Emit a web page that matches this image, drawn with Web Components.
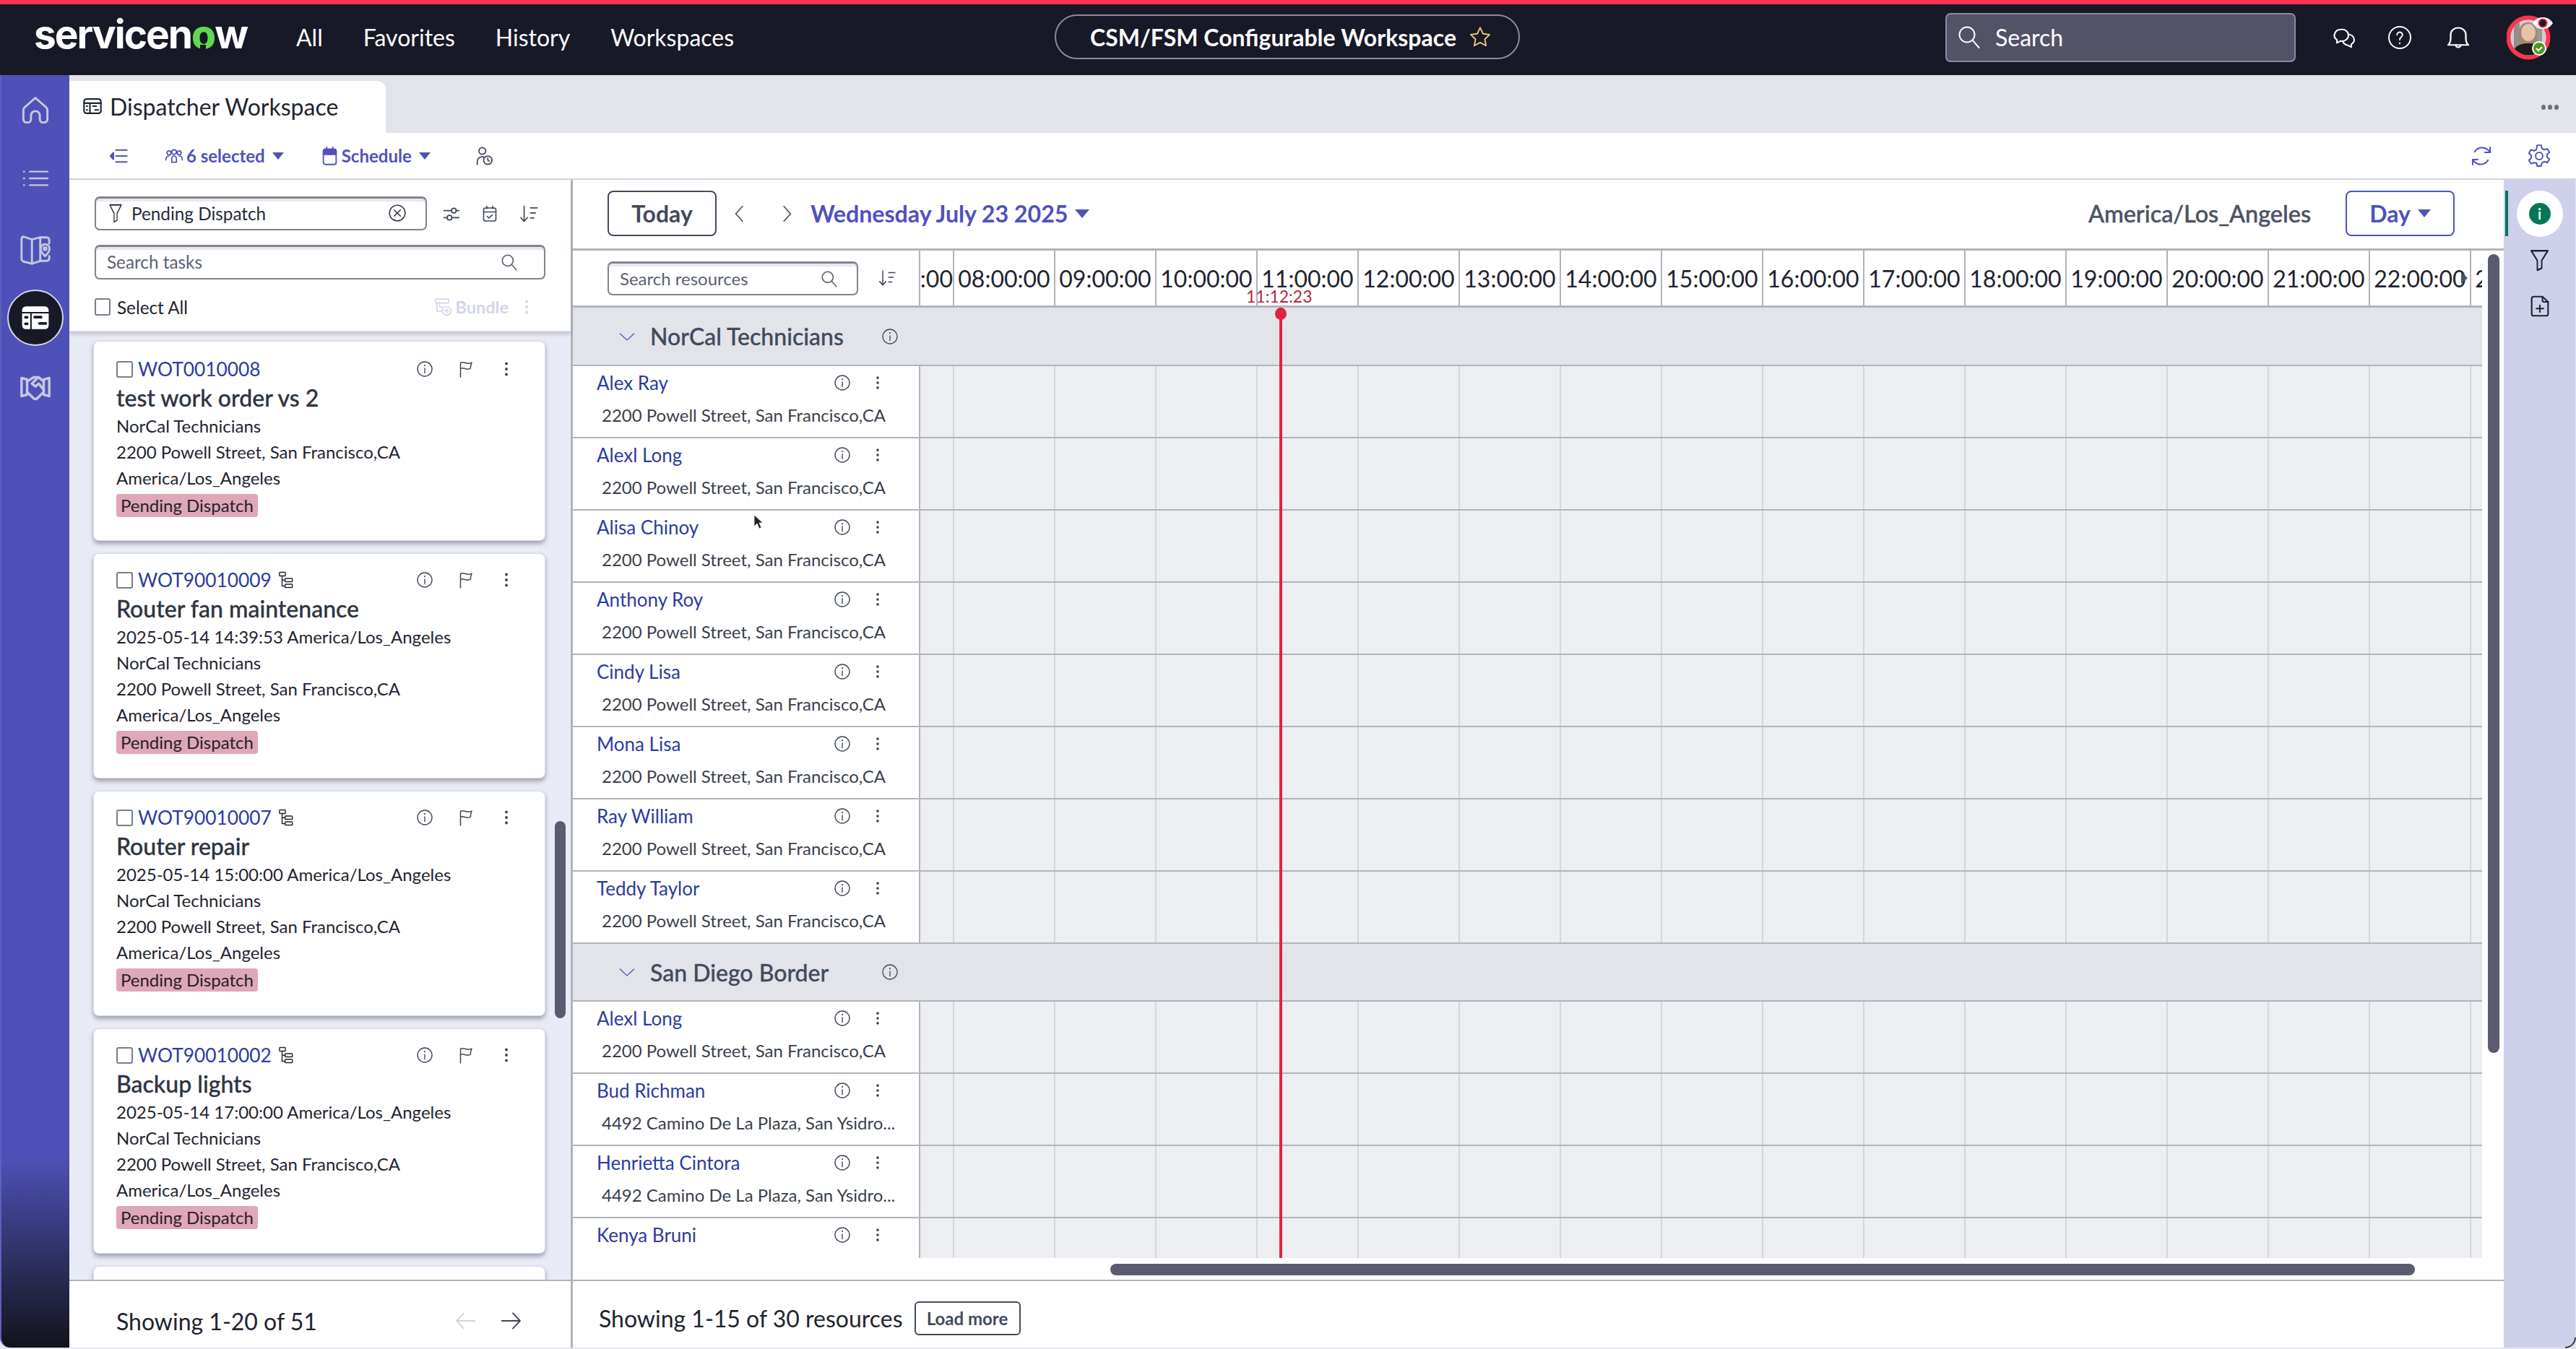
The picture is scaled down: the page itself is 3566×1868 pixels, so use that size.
<!doctype html>
<html>
<head>
<meta charset="utf-8">
<title>Dispatcher Workspace</title>
<style>
html,body{margin:0;padding:0;width:3566px;height:1868px;overflow:hidden;background:#e4e5ea}
body{font-family:"Lato","Liberation Sans",sans-serif;display:flex;flex-direction:column;color:#1f2430}
</style>
</head>
<body>
<sn-header></sn-header>
<div style="display:flex;height:1762px">
  <sn-rail></sn-rail>
  <div style="flex:1;display:flex;flex-direction:column;min-width:0">
    <sn-tabs></sn-tabs>
    <sn-toolbar></sn-toolbar>
    <div style="flex:1;display:flex;min-height:0">
      <task-panel></task-panel>
      <schedule-view></schedule-view>
      <side-rail></side-rail>
    </div>
  </div>
</div>

<script>
// all the icons in one place, 24 box unless the path says otherwise
var paths = {
  search: '<circle cx="10" cy="10" r="7"/><path d="M15.2 15.2 21 22"/>',
  chat: '<path d="M9 3a6.500 6.500 0 0 0-4 11.600V18l3.400-2.200A6.500 6.500 0 1 0 9 3Z"/><path d="M16.500 8.500a6 6 0 0 1 2.500 11V22.500L15.500 20.500a6 6 0 0 1-4.500-3.500"/>',
  help: '<circle cx="12" cy="12" r="10"/><path d="M9.500 9.500a2.500 2.500 0 1 1 3.800 2.100c-.9.6-1.300 1.100-1.300 2.400"/><path d="M12 17v.5"/>',
  bell: '<path d="M4 18.500c1.500-1.500 2-3 2-6V9.500a6 6 0 0 1 12 0V12.500c0 3 .5 4.500 2 6Z"/><path d="M10 18.500a2 2 0 0 0 4 0"/>',
  home: '<path d="M12 2 3.500 9.500A3 3 0 0 0 2.500 12v7a2.500 2.500 0 0 0 2.500 2.500h1A2.500 2.500 0 0 0 8.500 19v-3a3.500 3.500 0 0 1 7 0v3a2.500 2.500 0 0 0 2.500 2.500h1a2.500 2.500 0 0 0 2.500-2.500v-7a3 3 0 0 0-1-2.500Z"/>',
  list: '<path d="M7.500 5H22M7.500 12H22M7.500 19H22"/><path d="M2.500 5h.1M2.500 12h.1M2.500 19h.1"/>',
  map: '<path d="M22 8V5.500C22 4 21 3.500 19.500 3.500H15.500L9.500 5 3.500 3C2.500 3 2 3.800 2 5V19c0 1 .5 1.500 1.500 2L9.500 22.500 15.500 20.500H19.500C21 20.500 22 20 22 18.500V17"/><path d="M9.500 5V22.500M15.500 3.500V20.500"/><path d="M19 17s-3.200-3-3.200-5.300a3.200 3.200 0 0 1 6.400 0C22.200 14 19 17 19 17Z"/><circle cx="19" cy="11.600" r="1"/>',
  board: '<rect x="2" y="3.500" width="20" height="17" rx="3"/><path d="M2 8.500h20M9 8.500v12"/><path d="M5 12h1M5 16.500h1M12.500 12h4M15 16.500h4"/>',
  boardfill: '<rect x="1.500" y="3" width="21" height="18" rx="3" fill="#fff" stroke="none"/><path d="M1.500 8h21M8.500 8v13" stroke="#181926" stroke-width="1.200"/><path d="M4.200 11.600h1.300M4.200 16.800h1.300M11.500 11.500h5M15.200 16.500h5" stroke="#181926" stroke-width="2.200" stroke-linecap="round"/>',
  shake: '<path d="M2 5.500 6 6.500V17.500L2 18.500ZM22 5.500 18 6.500V17.500L22 18.500Z"/><path d="M6 8 10.500 5H14.500L18 8M6 15.500 10.500 20c1 .8 2 .8 3 0L18 15.500"/><path d="M14 5 9.500 9.500 12 11.500 14.500 9.500 18 14"/>',
  collapse: '<path d="M9 5h13M9 12h13M9 19h13"/><path d="M6 8 2.500 12 6 16Z" fill="currentColor"/>',
  people: '<circle cx="5.500" cy="8" r="2.500"/><circle cx="12" cy="7" r="3"/><circle cx="18.500" cy="8" r="2.500"/><path d="M1.500 17c0-3 1.500-5 4-5M9 20v-3.500c0-3 1-4.500 3-4.500s3 1.500 3 4.500V20ZM22.500 17c0-3-1.500-5-4-5"/>',
  calfill: '<rect x="3.500" y="4" width="17" height="18" rx="2.500"/><path d="M3.500 10h17V6.500a2.500 2.500 0 0 0-2.500-2.500H6a2.500 2.500 0 0 0-2.500 2.500Z" fill="currentColor"/><path d="M8 1.500V5M16 1.500V5"/>',
  personclock: '<circle cx="10" cy="6" r="4"/><path d="M4 22v-3c0-3.500 2.500-6 6-6 1 0 2 .2 2.800.7"/><circle cx="16.500" cy="17" r="5"/><path d="M16.500 14.500V17l1.800 1"/>',
  refresh: '<path d="M5.500 8A8.500 8.500 0 0 1 18.500 6L20.500 8.500"/><path d="M20.500 3.500v5h-5" stroke-linejoin="miter"/><path d="M18.500 16A8.500 8.500 0 0 1 5.500 18L3.500 15.500"/><path d="M3.500 20.500v-5h5" stroke-linejoin="miter"/>',
  gear: '<path d="M10 1.500h4l.6 3 2.400 1.400 3-1 2 3.500-2.300 2c.1.900.1 1.800 0 2.600l2.300 2-2 3.500-3-1-2.400 1.400-.6 3h-4l-.6-3L7 18.500l-3 1-2-3.500 2.300-2a11 11 0 0 1 0-2.600L2 9.400 4 5.900l3 1L9.400 5.500Z"/><circle cx="12" cy="12" r="3.500"/>',
  funnel: '<path d="M2.500 3h19L14.500 12.500V20L9.500 22V12.500Z"/>',
  xcircle: '<circle cx="12" cy="12" r="10"/><path d="M8 8l8 8M16 8l-8 8"/>',
  sliders: '<path d="M2.500 8h9M18 8h3.500M2.500 17H6M13 17h8.500"/><circle cx="15" cy="8" r="3"/><circle cx="9.500" cy="17" r="3"/>',
  cal: '<rect x="3.500" y="4" width="17" height="18" rx="2.500"/><path d="M3.500 9.500h17M8 1.500V5M16 1.500V5"/><path d="M8.500 15.500 11 18l4.500-4.500"/>',
  sort: '<path d="M6.500 3v18M2.500 16.500 6.500 21l4-4.500"/><path d="M14 5h8M14 11h6M14 17h4"/>',
  bundle: '<rect x="2.500" y="2" width="17" height="5" rx="1"/><path d="M4.500 7v10.500h6M8 7v5h4"/><circle cx="17" cy="17" r="5.500"/><path d="M17 14.500v5M14.500 17h5"/>',
  dots: '<path d="M12 4.500v.1M12 12v.1M12 19.500v.1" stroke-width="4"/>',
  info: '<circle cx="12" cy="12" r="10"/><path d="M12 11v6.500"/><path d="M12 7v.2" stroke-width="2"/>',
  flag: '<path d="M4.500 23V3.500c5-3 9.500 3.500 15.500-.5-1 3-2 5-1.500 8-5.500 4-9.500-2.500-14 .5"/>',
  tree: '<rect x="2" y="1.500" width="9" height="5" rx=".8"/><rect x="10.500" y="10" width="11" height="4.500" rx=".8"/><rect x="10.500" y="18" width="11" height="4.500" rx=".8"/><path d="M6 6.500V20.500H10.500M6 12.200H10.500"/>',
  chevleft: '<path d="M15.500 2.500 7 12l8.500 9.500"/>',
  chevright: '<path d="M8.500 2.500 17 12l-8.500 9.500"/>',
  chevdown: '<path d="M3 7l9 11 9-11"/>',
  larrow: '<path d="M22 12H3M10.500 4 3 12l7.500 8"/>',
  rarrow: '<path d="M2 12h19M13.500 4 21 12l-7.500 8"/>',
  file: '<path d="M14.500 2H6a2 2 0 0 0-2 2v16a2 2 0 0 0 2 2h12a2 2 0 0 0 2-2V7.500Z"/><path d="M14.500 2v4a1.500 1.500 0 0 0 1.500 1.500h4"/><path d="M12 11v7M8.500 14.500h7"/>'
};

class SnIcon extends HTMLElement {
  constructor() {
    super();
    this.attachShadow({ mode: "open" });
  }
  connectedCallback() {
    var size = this.getAttribute("size") || 28;
    var sw = this.getAttribute("sw") || 1.6;
    var h = this.getAttribute("h") || size;
    this.shadowRoot.innerHTML = `
<style>
:host{display:inline-flex;flex:none;line-height:0}
svg{width:${size}px;height:${h}px;display:block}
</style>
<svg viewBox="0 0 24 24" preserveAspectRatio="none" fill="none" stroke="currentColor" stroke-width="${sw}" stroke-linecap="round" stroke-linejoin="round">${paths[this.getAttribute("name")] || ""}</svg>`;
  }
}
customElements.define("sn-icon", SnIcon);

class SnHeader extends HTMLElement {
  constructor() {
    super();
    this.attachShadow({ mode: "open" });
    this.shadowRoot.innerHTML = `
<style>
:host{display:flex;align-items:center;height:98px;border-top:6px solid #ff3350;background:#181926;color:#fff;flex:none;position:relative;font-size:32px}
.logo{margin-left:47px;font:700 55px/1 "Inter","Liberation Sans",sans-serif;letter-spacing:-2px;width:300px;margin-top:-16px;position:relative;white-space:nowrap}
.logo b{color:#62d84e;font-weight:800;position:relative}
.logo b::after{content:"";position:absolute;left:50%;bottom:8px;width:8px;height:10px;margin-left:-4px;background:#181926}
nav{display:flex;gap:56px;margin-left:63px;margin-bottom:8px}
.pill{position:absolute;left:1460px;top:14px;width:640px;height:58px;border:2px solid #8a8a98;border-radius:31px;display:flex;align-items:center;justify-content:center;gap:17px;font-weight:700;font-size:32px;box-sizing:content-box}
.pill span{margin-left:10px}
.search{position:absolute;left:2693px;top:12px;width:485px;height:68px;box-sizing:border-box;border:2px solid #8a8b9c;border-radius:7px;background:#535367;display:flex;align-items:center;padding:0 0 2px 13px;gap:18px;font-size:32px}
.tools{position:absolute;left:3228px;top:0;height:92px;display:flex;align-items:center;gap:42px}
.me{position:absolute;left:3470px;top:16px;width:60px;height:60px}
</style>
<div class="logo">servicen<b>o</b>w</div>
<nav><span>All</span><span>Favorites</span><span>History</span><span>Workspaces</span></nav>
<div class="pill"><span>CSM/FSM Configurable Workspace</span>
  <svg width="32" height="32" viewBox="0 0 24 24" fill="none" stroke="#e9c878" stroke-width="1.400" stroke-linejoin="round"><path d="m12 2.500 3 6.300 6.800.9-5 4.700 1.300 6.800-6.100-3.300-6.100 3.300 1.300-6.800-5-4.700 6.800-.9Z"/></svg></div>
<div class="search"><sn-icon name="search" size="36" sw="1.300"></sn-icon><span>Search</span></div>
<div class="tools"><sn-icon name="chat" size="34" h="30" sw="1.500"></sn-icon><sn-icon name="help" size="36" sw="1.300"></sn-icon><sn-icon name="bell" size="42" h="38" sw="1.300"></sn-icon></div>
<div class="me">
  <svg width="76" height="76" viewBox="0 0 76 76" style="position:absolute;left:0;top:-6px">
    <circle cx="30" cy="36" r="27.500" fill="#ddd" stroke="#ff3350" stroke-width="6"/>
    <clipPath id="f"><circle cx="30" cy="36" r="24.500"/></clipPath>
    <g clip-path="url(#f)">
      <rect x="5" y="10" width="50" height="52" fill="#cfcfcf"/>
      <rect x="10" y="10" width="8" height="52" fill="#8f8f8f"/>
      <rect x="42" y="10" width="7" height="52" fill="#9a9a9a"/>
      <path d="M18 34c-2-14 4-19 12-19s14 5 12 19l2 12H16Z" fill="#a08a72"/>
      <ellipse cx="30" cy="29" rx="10" ry="12" fill="#e8c3ab"/>
      <path d="M8 62c0-13 9-18 22-18s22 5 22 18Z" fill="#1d1a1c"/>
    </g>
    <path d="M36 16c4-6 8-8 14-8s10 2 14 8c-4 6-8 8-14 8s-10-2-14-8Z" fill="#fff"/>
    <circle cx="50" cy="16" r="5.500" fill="#1a1a22"/><circle cx="50" cy="16" r="5.500" fill="none" stroke="#e3274a" stroke-width="2"/>
    <circle cx="45" cy="51" r="10" fill="#fff"/><circle cx="45" cy="51" r="8" fill="#4c9a1f"/>
    <path d="m41 51 3 3 5-5" stroke="#fff" stroke-width="2.200" fill="none"/>
  </svg>
</div>`;
  }
}
customElements.define("sn-header", SnHeader);

class SnRail extends HTMLElement {
  constructor() {
    super();
    this.attachShadow({ mode: "open" });
    this.shadowRoot.innerHTML = `
<style>
:host{display:flex;flex-direction:column;align-items:center;width:96px;flex:none;box-sizing:border-box;color:#c6c8dc;border-bottom-left-radius:14px;
 background:linear-gradient(#4f51b9 0,#4f51b9 1495px,#181926 1740px,#11121a 100%);border-left:2px solid #5d5fc0;padding-top:26px}
.slot{height:95px;display:flex;align-items:center;justify-content:center}
.on{width:78px;height:78px;box-sizing:border-box;border-radius:50%;background:#181926;border:2px solid #d5d6e6;margin:0 0 8px;display:flex;align-items:center;justify-content:center;color:#fff}
</style>
<div class="slot" style="height:46px;margin-bottom:48px"><sn-icon name="home" size="42" sw="1.700"></sn-icon></div>
<div class="slot" style="height:46px;margin-bottom:52px"><sn-icon name="list" size="40" h="32" sw="1.800"></sn-icon></div>
<div class="slot" style="height:46px;margin-bottom:33px"><sn-icon name="map" size="46" sw="1.500"></sn-icon></div>
<div class="on"><sn-icon name="boardfill" size="42"></sn-icon></div>
<div class="slot" style="height:46px;margin-top:26px"><sn-icon name="shake" size="46" sw="1.800"></sn-icon></div>`;
  }
}
customElements.define("sn-rail", SnRail);

class SnTabs extends HTMLElement {
  constructor() {
    super();
    this.attachShadow({ mode: "open" });
    this.shadowRoot.innerHTML = `
<style>
:host{display:flex;height:80px;flex:none;background:#e3e4ea;align-items:flex-end;justify-content:space-between}
.tab{width:438px;height:72px;background:#fff;border-top-right-radius:12px;display:flex;align-items:center;gap:10px;box-sizing:border-box;padding:0 0 2px 18px;font-size:32px;color:#1f2430}
.more{margin:0 24px 32px 0;display:flex;gap:3px}
.more i{width:6px;height:7px;border-radius:50%;background:#6b6e80}
</style>
<div class="tab"><sn-icon name="board" size="28" sw="1.800"></sn-icon><span>Dispatcher Workspace</span></div>
<div class="more"><i></i><i></i><i></i></div>`;
  }
}
customElements.define("sn-tabs", SnTabs);

class SnToolbar extends HTMLElement {
  constructor() {
    super();
    this.attachShadow({ mode: "open" });
    this.shadowRoot.innerHTML = `
<style>
:host{display:flex;height:65px;flex:none;box-sizing:border-box;background:#fff;border-bottom:2px solid #d3d4d8;align-items:center;color:#4f52bd;font-weight:700;font-size:24px;padding-left:54px}
.group{display:flex;align-items:center;gap:4px}
.tri{width:0;height:0;border:8px solid transparent;border-top:10px solid #4f52bd;border-bottom:0;margin-left:6px}
.end{margin-left:auto;display:flex;gap:46px;padding-right:34px}
</style>
<sn-icon name="collapse" size="28" sw="1.700"></sn-icon>
<div class="group" style="margin-left:50px"><sn-icon name="people" size="26" sw="1.600"></sn-icon><span>6 selected</span><i class="tri"></i></div>
<div class="group" style="margin-left:51px"><sn-icon name="calfill" size="25" h="28" sw="1.700"></sn-icon><span>Schedule</span><i class="tri"></i></div>
<sn-icon name="personclock" size="28" sw="1.500" style="margin-left:60px;color:#3f4657"></sn-icon>
<div class="end"><sn-icon name="refresh" size="34" sw="1.400"></sn-icon><sn-icon name="gear" size="34" sw="1.400"></sn-icon></div>`;
  }
}
customElements.define("sn-toolbar", SnToolbar);

var cardTemplate = document.createElement("template");
cardTemplate.innerHTML = `
<style>
:host{display:block;flex:none;box-sizing:border-box;background:#fff;border-radius:7px;width:624px;margin-left:34px;
 padding:21px 0 0 31px;box-shadow:0 0 0 1px #d9dbe7,0 4px 6px 1px rgba(70,72,90,.45);font-size:24px;color:#1f2430}
.top{display:flex;align-items:center;height:30px;line-height:30px}
.box{width:23px;height:23px;box-sizing:border-box;border:2px solid #7a7e8a;border-radius:3px;margin-right:7px}
a{color:#2c3c9e;font-size:26.300px}
.tree{margin-left:9px;color:#1f2430}
.title{font-size:32px;font-weight:500;-webkit-text-stroke:.3px #2e3440;color:#2e3440;line-height:36px;margin-top:7px;margin-bottom:3px}
.line{line-height:36px;height:36px}
.tag{display:inline-block;background:#dfa7b8;border-radius:4px;padding:0 6px;line-height:32px;font-size:24px;margin-top:4px;color:#25202a}
</style>
<div class="top"><i class="box"></i><a></a><sn-icon class="tree" name="tree" size="22" h="24" sw="1.500"></sn-icon>
  <span style="flex:1"></span>
  <sn-icon name="info" size="24" sw="1.400" style="color:#3f4657"></sn-icon>
  <sn-icon name="flag" size="24" sw="1.500" style="margin-left:33px;color:#3f4657"></sn-icon>
  <sn-icon name="dots" size="24" style="margin-left:32px;margin-right:41px;color:#3f4657"></sn-icon>
</div>
<div class="title"></div>
<div class="lines"></div>
<span class="tag">Pending Dispatch</span>`;

class TaskCard extends HTMLElement {
  constructor() {
    super();
    this.attachShadow({ mode: "open" });
    this.shadowRoot.appendChild(cardTemplate.content.cloneNode(true));
  }
  connectedCallback() {
    var s = this.shadowRoot;
    var when = this.getAttribute("when");
    this.style.height = (when ? 310 : 275) + "px";
    // the next card only peeks in at the bottom of the list, nothing of it is readable
    if (this.hasAttribute("blank")) {
      s.querySelectorAll(".top,.title,.lines,.tag").forEach(function (n) { n.remove(); });
      this.style.height = "310px";
      return;
    }
    s.querySelector("a").textContent = this.getAttribute("num");
    s.querySelector(".title").textContent = this.getAttribute("label");
    if (!this.hasAttribute("tree")) s.querySelector(".tree").remove();
    var lines = ["NorCal Technicians", "2200 Powell Street, San Francisco,CA", "America/Los_Angeles"];
    if (when) lines.unshift(when);
    else this.style.paddingTop = "23px";
    s.querySelector(".lines").innerHTML = lines.map(function (l) { return '<div class="line">' + l + "</div>"; }).join("");
  }
}
customElements.define("task-card", TaskCard);

class TaskPanel extends HTMLElement {
  constructor() {
    super();
    this.attachShadow({ mode: "open" });
    this.shadowRoot.innerHTML = `
<style>
:host{display:flex;flex-direction:column;width:697px;flex:none;box-sizing:border-box;border-right:3px solid #b2b4bc;background:#fff;position:relative;font-size:24.300px}
.head{height:211px;flex:none;box-sizing:border-box;padding:23px 0 0 35px;background:#fff;border-bottom:2px solid #d6d7e0;position:relative;z-index:1;box-shadow:0 3px 5px rgba(80,80,100,.25)}
.row{display:flex;align-items:center}
.inp{box-sizing:border-box;height:47px;border:2px solid #82858f;border-top-width:3px;box-shadow:inset 0 4px 0 #e8e9ec;border-radius:7px;display:flex;align-items:center;padding:0 13px 2px 17px;color:#262b38}
.list{flex:1;min-height:0;overflow:hidden;background:#e9ebf6;display:flex;flex-direction:column;gap:19px;padding-top:13px;position:relative}
.foot{height:94px;flex:none;box-sizing:border-box;border-top:2px solid #b2b4bc;background:#fff;display:flex;align-items:center;padding:18px 0 0 65px;font-size:32px;color:#1f2430}
.thumb{position:absolute;left:672px;top:888px;width:15px;height:273px;border-radius:8px;background:#5c5c70;z-index:2}
</style>
<div class="head">
  <div class="row">
    <div class="inp" style="width:460px"><sn-icon name="funnel" size="20" h="30" sw="1.500"></sn-icon><span style="margin-left:12px">Pending Dispatch</span><span style="flex:1"></span><sn-icon name="xcircle" size="26" sw="1.300" style="margin-right:13px"></sn-icon></div>
    <sn-icon name="sliders" size="26" sw="1.600" style="margin-left:21px;color:#3f4657"></sn-icon>
    <sn-icon name="cal" size="24" sw="1.600" style="margin-left:28px;color:#3f4657"></sn-icon>
    <sn-icon name="sort" size="28" sw="1.400" style="margin-left:28px;color:#3f4657"></sn-icon>
  </div>
  <div class="inp" style="width:624px;height:48px;margin-top:20px;color:#5b6172;padding-left:15px"><span>Search tasks</span><span style="flex:1"></span><sn-icon name="search" size="26" sw="1.500" style="margin-right:22px"></sn-icon></div>
  <div class="row" style="margin-top:25px;height:26px">
    <i style="width:22px;height:24px;box-sizing:border-box;border:2px solid #7a7e8a;border-radius:3px"></i>
    <span style="margin-left:9px">Select All</span><span style="flex:1"></span>
    <span style="display:flex;align-items:center;color:#d3d4ee;font-weight:700;gap:5px;margin-right:13px;font-size:23.500px"><sn-icon name="bundle" size="26" sw="1.500"></sn-icon>Bundle</span>
    <sn-icon name="dots" size="24" style="color:#d3d4ee;margin-right:49px"></sn-icon>
  </div>
</div>
<div class="list">
  <task-card num="WOT0010008" label="test work order vs 2"></task-card>
  <task-card num="WOT90010009" label="Router fan maintenance" when="2025-05-14 14:39:53 America/Los_Angeles" tree></task-card>
  <task-card num="WOT90010007" label="Router repair" when="2025-05-14 15:00:00 America/Los_Angeles" tree></task-card>
  <task-card num="WOT90010002" label="Backup lights" when="2025-05-14 17:00:00 America/Los_Angeles" tree></task-card>
  <task-card blank></task-card>
</div>
<div class="foot"><span>Showing 1-20 of 51</span><span style="flex:1"></span>
  <sn-icon name="larrow" size="32" sw="1.400" style="color:#d3d4da"></sn-icon>
  <sn-icon name="rarrow" size="32" sw="1.400" style="margin:0 66px 0 32px;color:#3f4657"></sn-icon></div>
<div class="thumb"></div>`;
  }
}
customElements.define("task-panel", TaskPanel);

class ResourceRow extends HTMLElement {
  constructor() {
    super();
    this.attachShadow({ mode: "open" });
    this.shadowRoot.innerHTML = `
<style>
:host{display:flex;flex:none;height:100px;box-sizing:border-box;border-bottom:2px solid #b2b4bc}
.who{width:481px;flex:none;box-sizing:border-box;background:#fff;border-right:2px solid #b2b4bc;padding:0 0 0 33px;position:relative}
.n{display:flex;align-items:center;height:46px;color:#2c3c9e;font-size:26px}
.n span{flex:1}
.a{margin-left:7px;font-size:24px;color:#3a3f4c;white-space:nowrap;line-height:34px;height:34px;margin-top:5px}
.cells{flex:1;background:linear-gradient(90deg,#d5d6da 2px,transparent 2px) 45px 0/140px 100% #eceef1}
</style>
<div class="who">
  <div class="n"><span></span><sn-icon name="info" size="24" sw="1.400" style="color:#3f4657"></sn-icon><sn-icon name="dots" size="22" style="margin:0 46px 0 26px;color:#3f4657"></sn-icon></div>
  <div class="a"></div>
</div>
<div class="cells"></div>`;
  }
  connectedCallback() {
    this.shadowRoot.querySelector(".n span").textContent = this.getAttribute("name");
    this.shadowRoot.querySelector(".a").textContent = this.getAttribute("addr");
  }
}
customElements.define("resource-row", ResourceRow);

class ResourceGroup extends HTMLElement {
  constructor() {
    super();
    this.attachShadow({ mode: "open" });
    this.shadowRoot.innerHTML = `
<style>
:host{display:block;flex:none}
.g{height:81px;box-sizing:border-box;background:#e2e4ea;border-bottom:2px solid #b2b4bc;display:flex;align-items:center;padding-left:62px;font-size:32px;font-weight:500;-webkit-text-stroke:.3px #434a5b;color:#434a5b}
.g span{margin:0 0 0 19px;width:320px}
</style>
<div class="g"><sn-icon name="chevdown" size="26" h="20" sw="1.400" style="color:#4f52bd"></sn-icon><span></span><sn-icon name="info" size="24" sw="1.300"></sn-icon></div>
<slot></slot>`;
  }
  connectedCallback() {
    this.shadowRoot.querySelector("span").textContent = this.getAttribute("name");
    if (this.hasAttribute("h")) this.shadowRoot.querySelector(".g").style.height = this.getAttribute("h") + "px";
  }
}
customElements.define("resource-group", ResourceGroup);

class ScheduleView extends HTMLElement {
  constructor() {
    super();
    this.attachShadow({ mode: "open" });
    var hours = "";
    for (var h = 8; h <= 23; h++) hours += "<div class='h'>" + (h < 10 ? "0" + h : h) + ":00:00</div>";
    this.shadowRoot.innerHTML = `
<style>
:host{display:flex;flex-direction:column;flex:1;min-width:0;position:relative;background:#fff;color:#1f2430}
.bar{height:98px;flex:none;box-sizing:border-box;border-bottom:3px solid #b2b4bc;display:flex;align-items:center;padding:0 68px 2px 48px;font-size:32px}
.today{width:151px;height:63px;box-sizing:border-box;border:2px solid #434a5b;border-radius:8px;display:flex;align-items:center;justify-content:center;font-weight:700;font-size:32px;color:#434a5b}
.date{color:#4f52bd;font-weight:700;font-size:32.300px;margin-left:20px;letter-spacing:-.1px}
.tri{width:0;height:0;border:10px solid transparent;border-top:12px solid #4f52bd;border-bottom:0;margin-left:10px;display:block}
.zone{margin-left:auto;font-weight:500;-webkit-text-stroke:.45px #4b5263;color:#4b5263;font-size:32.400px}
.day{margin-left:48px;width:151px;height:63px;box-sizing:border-box;border:2px solid #4f52bd;border-radius:8px;display:flex;align-items:center;justify-content:center;font-weight:700;color:#4f52bd;font-size:32px}
.body{width:2643px;overflow:hidden;flex:none;height:1395px}
.times{display:flex;height:79px;box-sizing:border-box;border-bottom:3px solid #b2b4bc}
.tl{width:481px;flex:none;box-sizing:border-box;border-right:2px solid #b2b4bc;display:flex;align-items:center;padding-left:48px}
.in{width:347px;height:47px;box-sizing:border-box;border:2px solid #82858f;border-top-width:3px;box-shadow:inset 0 4px 0 #e8e9ec;border-radius:7px;display:flex;align-items:center;justify-content:space-between;padding:0 25px 0 15px;font-size:24px;color:#5b6172}
.clip{overflow:hidden;flex:1;display:flex;position:relative;align-items:center}
.h{flex:none;width:140px;height:100%;box-sizing:border-box;border-left:2px solid #b2b4bc;display:flex;align-items:center;justify-content:center;font-size:32px;color:#1f2430}
.first{flex:none;width:45px;overflow:hidden;height:100%;display:flex;align-items:center;justify-content:flex-end;font-size:32px}
.tri2{position:absolute;left:2133px;top:30px;width:0;height:0;border:8px solid transparent;border-left:9px solid #4b5263;border-right:0}
.rows{height:1316px;overflow:hidden}
.marker{position:absolute;left:978px;top:177px;width:4px;height:1316px;background:#e0243f}
.marker::before{content:"";position:absolute;left:-6px;top:0;width:16px;height:17px;border-radius:50%;background:#e0243f}
.now{position:absolute;left:932px;top:148px;color:#b3273e;font-size:23px;line-height:26px}
.vthumb{position:absolute;left:2651px;top:103px;width:16px;height:1106px;border-radius:8px;background:#5c5c70}
.hthumb{position:absolute;left:744px;top:1501px;width:1806px;height:16px;border-radius:8px;background:#5c5c70}
.foot{height:94px;flex:none;margin-top:auto;box-sizing:border-box;border-top:2px solid #b2b4bc;display:flex;align-items:center;padding:10px 0 0 36px;font-size:32px}
.more{margin-left:16px;width:147px;height:47px;box-sizing:border-box;border:2px solid #434a5b;border-radius:6px;display:flex;align-items:center;justify-content:center;font-weight:700;font-size:24px;color:#434a5b}
</style>
<div class="bar">
  <div class="today">Today</div>
  <sn-icon name="chevleft" size="26" sw="1.500" style="margin-left:19px;color:#434a5b"></sn-icon>
  <sn-icon name="chevright" size="26" sw="1.500" style="margin-left:39px;color:#434a5b"></sn-icon>
  <div class="date">Wednesday July 23 2025</div><i class="tri"></i>
  <div class="zone">America/Los_Angeles</div>
  <div class="day">Day<i class="tri" style="border-width:9px;border-top-width:11px"></i></div>
</div>
<div class="body">
  <div class="times">
    <div class="tl"><div class="in"><span>Search resources</span><sn-icon name="search" size="26" sw="1.500"></sn-icon></div><sn-icon name="sort" size="26" sw="1.400" style="margin-left:27px;color:#3f4657"></sn-icon></div>
    <div class="clip"><div class="first"><span style="white-space:nowrap">07:00:00</span></div>${hours}<i class="tri2"></i></div>
  </div>
  <div class="rows">
    <resource-group name="NorCal Technicians">
      <resource-row name="Alex Ray" addr="2200 Powell Street, San Francisco,CA"></resource-row>
      <resource-row name="Alexl Long" addr="2200 Powell Street, San Francisco,CA"></resource-row>
      <resource-row name="Alisa Chinoy" addr="2200 Powell Street, San Francisco,CA"></resource-row>
      <resource-row name="Anthony Roy" addr="2200 Powell Street, San Francisco,CA"></resource-row>
      <resource-row name="Cindy Lisa" addr="2200 Powell Street, San Francisco,CA"></resource-row>
      <resource-row name="Mona Lisa" addr="2200 Powell Street, San Francisco,CA"></resource-row>
      <resource-row name="Ray William" addr="2200 Powell Street, San Francisco,CA"></resource-row>
      <resource-row name="Teddy Taylor" addr="2200 Powell Street, San Francisco,CA"></resource-row>
    </resource-group>
    <resource-group name="San Diego Border" h="80">
      <resource-row name="Alexl Long" addr="2200 Powell Street, San Francisco,CA"></resource-row>
      <resource-row name="Bud Richman" addr="4492 Camino De La Plaza, San Ysidro..."></resource-row>
      <resource-row name="Henrietta Cintora" addr="4492 Camino De La Plaza, San Ysidro..."></resource-row>
      <resource-row name="Kenya Bruni" addr=""></resource-row>
    </resource-group>
  </div>
</div>
<div class="now">11:12:23</div>
<div class="marker"></div>
<div class="vthumb"></div>
<div class="hthumb"></div>
<div class="foot"><span>Showing 1-15 of 30 resources</span><div class="more">Load more</div></div>
<svg style="position:absolute;left:250px;top:463px" width="14" height="22" viewBox="0 0 14 22"><path d="M1 1v16l4-4 3 7 3-1-3-7h5Z" fill="#222" stroke="#fff" stroke-width=".8"/></svg>`;
  }
}
customElements.define("schedule-view", ScheduleView);

class SideRail extends HTMLElement {
  constructor() {
    super();
    this.attachShadow({ mode: "open" });
    this.shadowRoot.innerHTML = `
<style>
:host{display:flex;flex-direction:column;align-items:center;width:99px;margin-right:1px;flex:none;box-sizing:border-box;background:#cfd1ec;border-bottom-right-radius:15px;color:#1f2430;position:relative;padding-top:15px}
.tab{width:64px;height:64px;border-radius:50%;background:#fff;display:flex;align-items:center;justify-content:center;flex:none}
.dot{width:30px;height:30px;border-radius:50%;background:#047857;color:#fff;font-size:20px;font-weight:700;display:flex;align-items:center;justify-content:center}
.bar{position:absolute;left:2px;top:15px;width:4px;height:63px;background:#047857}
.corner{position:absolute;right:-1px;bottom:-1px}
</style>
<div class="bar"></div>
<div class="tab"><div class="dot">i</div></div>
<sn-icon name="funnel" size="29" h="34" sw="1.600" style="margin-top:15px"></sn-icon>
<sn-icon name="file" size="34" h="32" sw="1.500" style="margin-top:31px"></sn-icon>
<svg class="corner" width="16" height="16" viewBox="0 0 16 16"><path d="M15 1A14 14 0 0 1 1 15" fill="none" stroke="#3a3a44" stroke-width="2"/></svg>`;
  }
}
customElements.define("side-rail", SideRail);
</script>
</body>
</html>
